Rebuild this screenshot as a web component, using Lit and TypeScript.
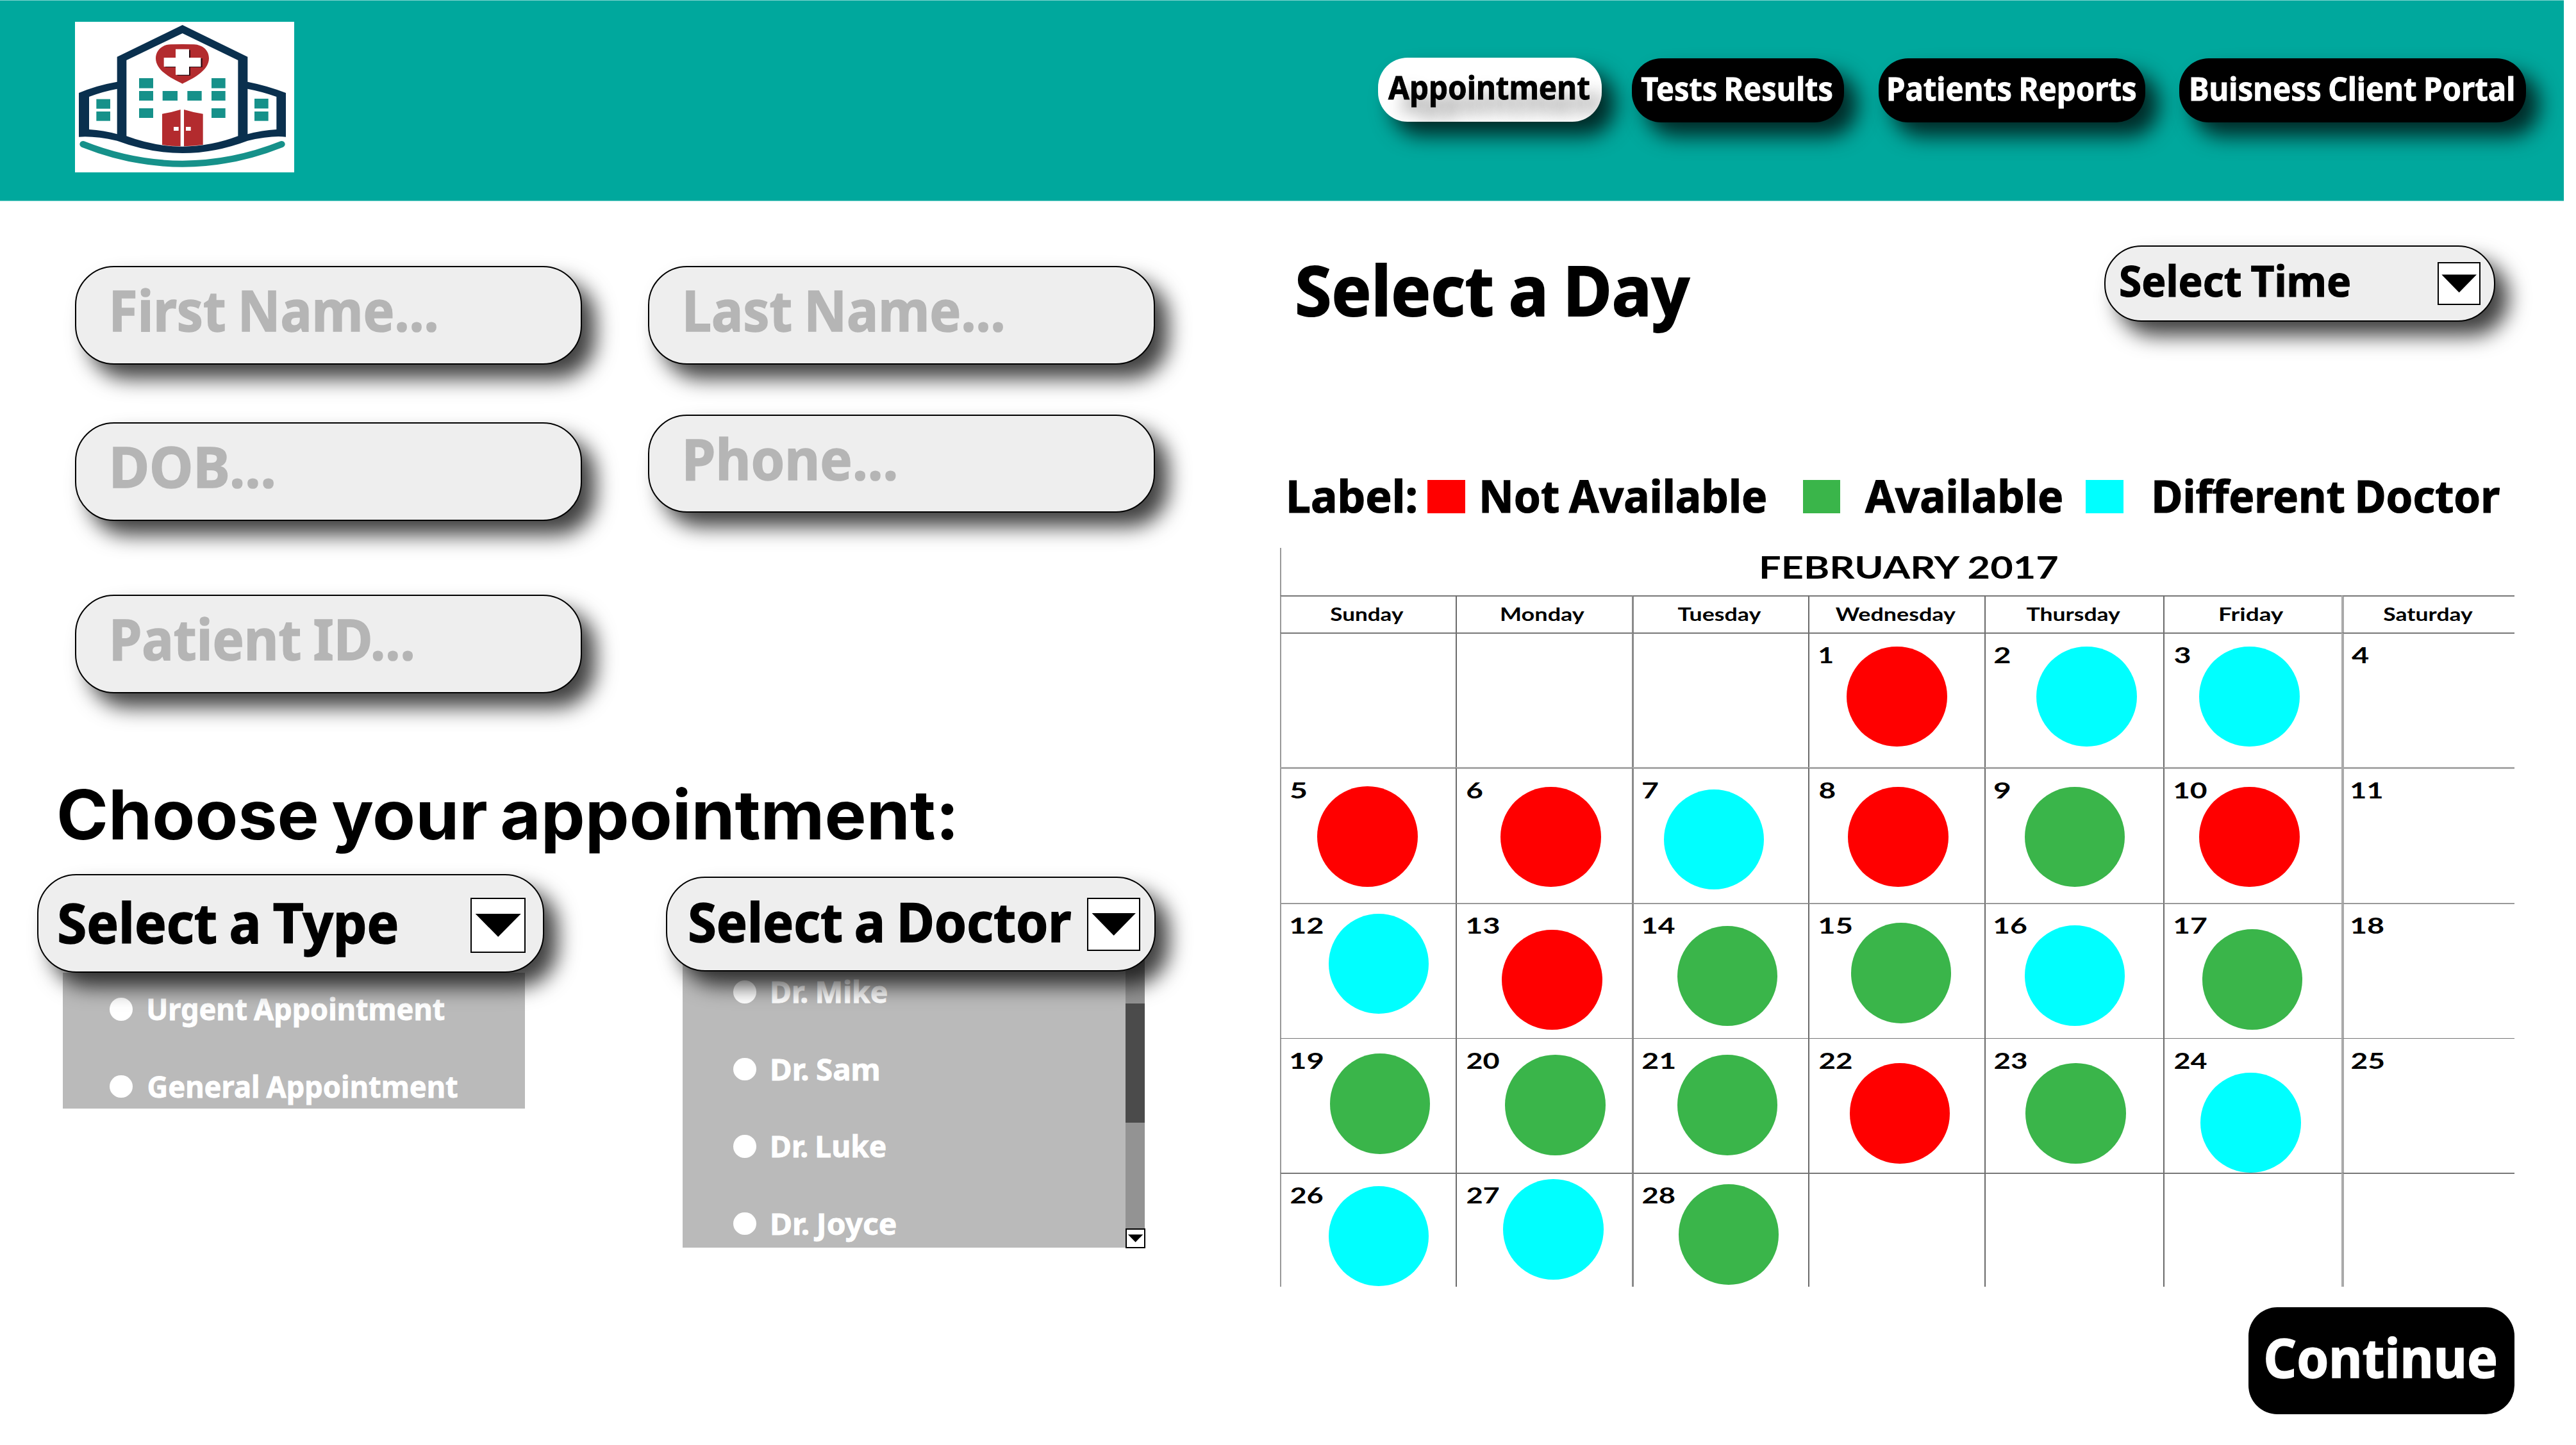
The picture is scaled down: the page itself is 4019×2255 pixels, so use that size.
import { LitElement, html, css, svg, nothing } from "lit";
import { customElement, property, state } from "lit/decorators.js";
import { styleMap } from "lit/directives/style-map.js";
import { classMap } from "lit/directives/class-map.js";

const HUMANIST = '"Noto Sans", "Open Sans", sans-serif';
const pen = document.createElement("canvas").getContext("2d")!;

/** One line of text whose ink fills a given width and whose capitals have a given height. */
@customElement("fit-text")
export class FitText extends LitElement {
  @property() text = "";
  @property({ type: Number }) w = 100;
  @property({ type: Number }) cap = 30;
  @property() family = HUMANIST;
  @property({ type: Number }) weight = 700;
  /** Width taken off each word space, in em. */
  @property({ type: Number }) tighten = 0.04;

  static styles = css`
    :host {
      display: block;
      flex: none;
    }
    .box {
      display: block;
    }
    .ink {
      display: block;
      width: max-content;
      white-space: nowrap;
      transform-origin: 0 0;
      font-kerning: normal;
    }
    .dense {
      -webkit-text-stroke: 0.018em currentColor;
    }
  `;

  render() {
    const probe = 200;
    pen.font = `${this.weight} ${probe}px ${this.family}`;
    const size = (this.cap / pen.measureText("H").actualBoundingBoxAscent) * probe;
    const m = pen.measureText(this.text);
    const k = size / probe;
    const gaps = this.text.split(" ").length - 1;
    const inkWidth = (m.actualBoundingBoxLeft + m.actualBoundingBoxRight) * k - gaps * this.tighten * size;
    const sx = this.w / inkWidth;
    const tx = m.actualBoundingBoxLeft * k * sx;
    const ascent = Math.round(m.fontBoundingBoxAscent * k);
    const descent = Math.round(m.fontBoundingBoxDescent * k);
    return html`<span class="box" style=${styleMap({ width: `${this.w}px`, height: `${this.cap}px` })}
      ><span
        class=${classMap({ ink: true, dense: this.family === HUMANIST })}
        style=${styleMap({
          fontFamily: this.family,
          fontWeight: String(this.weight),
          fontSize: `${size}px`,
          wordSpacing: `${-this.tighten}em`,
          lineHeight: `${ascent + descent}px`,
          transform: `translate(${tx}px, ${this.cap - ascent}px) scaleX(${sx})`,
        })}
        >${this.text}</span
      ></span
    >`;
  }
}

@customElement("hospital-logo")
export class HospitalLogo extends LitElement {
  static styles = css`
    :host {
      display: block;
      width: 342px;
      height: 235px;
      background: #fff;
    }
    svg {
      display: block;
      width: 100%;
      height: 100%;
    }
    .navy {
      fill: #0a304e;
    }
    .teal {
      fill: #16918a;
    }
    .red {
      fill: #b32b2e;
    }
    .white {
      fill: #fff;
    }
    .shade {
      fill: #2a0a10;
    }
    .swoosh {
      fill: none;
      stroke: #16918a;
      stroke-width: 30;
      stroke-linecap: round;
    }
  `;

  render() {
    const windows = [
      [381, 336, 66, 47], [381, 396, 66, 45], [381, 477, 66, 45],
      [720, 336, 65, 47], [720, 396, 65, 45], [720, 477, 65, 45],
      [491, 396, 70, 45], [607, 396, 67, 45],
      [181, 434, 65, 45], [181, 492, 65, 44],
      [921, 432, 65, 46], [921, 492, 65, 44],
    ];
    return html`<svg viewBox="81 72 1026 705" preserveAspectRatio="none" aria-label="Hospital">
      <path
        class="navy"
        d="M584 87 L889 236 V353 Q985 372 1068 405 V611 Q1000 603 889 629 Q735 687 584 687 Q433 687 278 629 Q170 605 99 611 V405 Q180 370 278 353 V236 Z"
      />
      <path class="white" d="M584 126 L844 252 V607 Q715 656 584 656 Q453 656 322 607 V252 Z" />
      <path class="white" d="M278 386 Q205 400 147 423 V576 Q215 580 278 598 Z" />
      <path class="white" d="M889 386 Q962 400 1024 423 V576 Q955 580 889 598 Z" />
      ${windows.map(([x, y, w, h]) => svg`<rect class="teal" x=${x} y=${y} width=${w} height=${h} />`)}
      <path
        class="red"
        d="M584 362 C545 342 459 305 459 243 C459 205 490 178 530 178 Q584 176 638 178 C678 180 708 205 708 243 C708 305 622 342 584 362 Z"
      />
      <path class="shade" d="M560 205 H621 V243 H677 V285 H621 V324 H560 V285 H504 V243 H560 Z" />
      <path class="white" d="M552 200 H615 V240 H670 V282 H615 V320 H552 V282 H497 V240 H552 Z" />
      <path class="red" d="M489 503 Q530 497 575 483 V655 Q530 654 489 648 Z" />
      <path class="red" d="M591 483 Q636 497 680 503 V648 Q636 654 591 655 Z" />
      <rect class="white" x="543" y="564" width="23" height="18" />
      <rect class="white" x="600" y="564" width="23" height="18" />
      <path class="swoosh" d="M118 645 Q350 737 584 737 Q818 737 1049 645" />
    </svg>`;
  }
}

@customElement("arrow-box")
export class ArrowBox extends LitElement {
  static styles = css`
    :host {
      display: block;
      box-sizing: border-box;
      flex: none;
      background: #fff;
      border: 2px solid #000;
    }
    svg {
      display: block;
      width: 100%;
      height: 100%;
    }
  `;

  render() {
    return html`<svg viewBox="0 0 86 86"><path d="M6 24 H80.5 L43.2 62 Z" /></svg>`;
  }
}

type Status = "busy" | "free" | "other";
interface Day {
  n: number;
  status?: Status;
  cx?: number;
  cy?: number;
}

const COLS = [1997, 2271, 2546, 2821, 3096, 3375, 3653];
const ROWS = [987, 1197, 1409, 1620, 1830];
const NUM_X = [2014, 2289.3, 2563.3, 2839, 3112.3, 3393.2, 3669];

const DAYS: Day[] = [
  { n: 1, status: "busy", cx: 2959.5, cy: 1087 },
  { n: 2, status: "other", cx: 3255.4, cy: 1087 },
  { n: 3, status: "other", cx: 3509.5, cy: 1087 },
  { n: 4 },
  { n: 5, status: "busy", cx: 2133.4, cy: 1305.3 },
  { n: 6, status: "busy", cx: 2419.7, cy: 1305.8 },
  { n: 7, status: "other", cx: 2673.9, cy: 1310 },
  { n: 8, status: "busy", cx: 2961.4, cy: 1305.8 },
  { n: 9, status: "free", cx: 3236.8, cy: 1306 },
  { n: 10, status: "busy", cx: 3509.5, cy: 1306 },
  { n: 11 },
  { n: 12, status: "other", cx: 2150.9, cy: 1504 },
  { n: 13, status: "busy", cx: 2421.6, cy: 1529.2 },
  { n: 14, status: "free", cx: 2694.9, cy: 1522.8 },
  { n: 15, status: "free", cx: 2965.8, cy: 1518.5 },
  { n: 16, status: "other", cx: 3236.8, cy: 1522.6 },
  { n: 17, status: "free", cx: 3513.8, cy: 1528.7 },
  { n: 18 },
  { n: 19, status: "free", cx: 2153.2, cy: 1722.6 },
  { n: 20, status: "free", cx: 2426.4, cy: 1724.7 },
  { n: 21, status: "free", cx: 2694.9, cy: 1724.7 },
  { n: 22, status: "busy", cx: 2963.8, cy: 1737.3 },
  { n: 23, status: "free", cx: 3238.6, cy: 1737.3 },
  { n: 24, status: "other", cx: 3511.6, cy: 1751.9 },
  { n: 25 },
  { n: 26, status: "other", cx: 2150.9, cy: 1928.8 },
  { n: 27, status: "other", cx: 2423.6, cy: 1918.7 },
  { n: 28, status: "free", cx: 2696.8, cy: 1926.7 },
];

const WEEKDAYS: [string, number][] = [
  ["Sunday", 113.5],
  ["Monday", 129],
  ["Tuesday", 129.5],
  ["Wednesday", 187],
  ["Thursday", 146],
  ["Friday", 98.5],
  ["Saturday", 139],
];

@customElement("month-calendar")
export class MonthCalendar extends LitElement {
  static styles = css`
    :host {
      display: grid;
      grid-template-columns: 274px 275px 275px 275px 279px 278px 270px;
      grid-template-rows: 74px 58px 210px 212px 211px 210px 178px;
      width: 1926px;
    }
    .title {
      grid-column: 1 / -1;
      box-sizing: border-box;
      border-left: 2px solid #999;
      padding: 13.5px 0 0 750px;
    }
    .cell {
      box-sizing: border-box;
      position: relative;
      border-left: 2px solid #6a6a6a;
      border-top: 2px solid #777;
    }
    .c0 {
      border-left-color: #999;
    }
    .c2 {
      border-left-width: 3px;
      border-left-color: #8a8a8a;
    }
    .c6 {
      border-left-width: 4px;
      border-left-color: #aaa;
    }
    .r1 {
      border-top-width: 3px;
      border-top-color: #a8a8a8;
    }
    .r2 {
      border-top-color: #999;
    }
    .r3 {
      border-top-width: 1px;
    }
    .name {
      display: flex;
      justify-content: center;
      padding: 18px 4px 0 0;
    }
    .dot {
      position: absolute;
      width: 156.5px;
      height: 156.5px;
      border-radius: 50%;
      z-index: 1;
    }
    .busy {
      background: #f00;
    }
    .free {
      background: #3ab54a;
    }
    .other {
      background: #0ff;
    }
    .num {
      position: relative;
      display: block;
      z-index: 2;
    }
  `;

  private numberWidth(n: number) {
    if (n === 1) return 19.5;
    if (n === 4) return 26;
    if (n < 10) return 23.5;
    return n === 11 ? 47 : 49.5;
  }

  private borderLeft(c: number) {
    return c === 6 ? 4 : c === 2 ? 3 : 2;
  }

  private cell(r: number, c: number) {
    const day = DAYS[r * 7 + c - 3];
    const bl = this.borderLeft(c);
    const bt = r === 1 ? 3 : r === 3 ? 1 : 2;
    return html`<div class=${classMap({ cell: true, [`c${c}`]: true, [`r${r}`]: true })}>
      ${day
        ? html`<fit-text
              class="num"
              style=${styleMap({
                paddingLeft: `${NUM_X[c] - COLS[c] - bl}px`,
                paddingTop: `${[1010, 1221.2, 1432, 1643, 1853.4][r] - ROWS[r] - bt}px`,
              })}
              .text=${String(day.n)}
              .w=${this.numberWidth(day.n)}
              .cap=${25.3}
              .family=${"Lato, sans-serif"}
            ></fit-text>
            ${day.status
              ? html`<span
                  class="dot ${day.status}"
                  style=${styleMap({
                    left: `${day.cx! - 78.25 - COLS[c] - bl}px`,
                    top: `${day.cy! - 78.25 - ROWS[r] - bt}px`,
                  })}
                ></span>`
              : nothing}`
        : nothing}
    </div>`;
  }

  render() {
    return html`
      <div class="title">
        <fit-text
          .text=${"FEBRUARY 2017"}
          .w=${463.5}
          .cap=${34.3}
          .tighten=${0}
          .family=${"Lato, sans-serif"}
        ></fit-text>
      </div>
      ${WEEKDAYS.map(
        ([name, w], c) => html`<div class="cell name c${c}">
          <fit-text .text=${name} .w=${w} .cap=${20.4} .family=${"Lato, sans-serif"}></fit-text>
        </div>`
      )}
      ${ROWS.map((_, r) => COLS.map((_x, c) => this.cell(r, c)))}
    `;
  }
}

@customElement("app-root")
export class AppRoot extends LitElement {
  @state() private types: [string, number][] = [
    ["Urgent Appointment", 461],
    ["General Appointment", 481.5],
  ];
  @state() private doctors: [string, number][] = [
    ["Dr. Mike", 178.5],
    ["Dr. Sam", 165.5],
    ["Dr. Luke", 176.5],
    ["Dr. Joyce", 192.5],
  ];

  static styles = css`
    :host {
      display: block;
      width: 4019px;
      height: 2255px;
      overflow: hidden;
      background: #fff;
      color: #000;
      --drop: 21px 22px 32px rgba(0, 0, 0, 0.75);
    }
    .header {
      display: flex;
      align-items: flex-start;
      justify-content: space-between;
      box-sizing: border-box;
      width: 4000px;
      height: 314px;
      padding: 33px 59px 0 117px;
      border-top: 1px solid #7fd3ce;
      border-bottom: 1px solid #7fd3ce;
      background: #00a89d;
    }
    .nav {
      display: flex;
      align-items: flex-start;
      padding-top: 56px;
    }
    .tab {
      box-sizing: border-box;
      height: 100px;
      padding-top: 31px;
      margin-top: 1px;
      border-radius: 46px;
      background: #000;
      color: #fff;
      box-shadow: var(--drop);
    }
    .t0 {
      width: 348.5px;
      margin-top: 0;
      margin-right: 47.5px;
      padding-top: 30px;
      padding-left: 15.5px;
      overflow: hidden;
      background: #fff;
      color: #000;
      text-shadow: 22px 22px 26px rgba(0, 0, 0, 0.45);
    }
    .t1 {
      width: 331px;
      margin-right: 54px;
      padding-left: 14.5px;
    }
    .t2 {
      width: 416px;
      margin-right: 53px;
      padding-left: 16px;
    }
    .t3 {
      width: 541px;
      padding-left: 18.5px;
    }
    .main {
      display: flex;
      align-items: flex-start;
    }
    .left {
      width: 1997px;
      flex: none;
      padding-top: 101px;
    }
    .fields {
      display: flex;
      gap: 103px;
      padding-left: 117px;
    }
    .col-a,
    .col-b {
      display: flex;
      flex-direction: column;
      width: 791px;
    }
    .col-a {
      gap: 90.5px;
    }
    .col-b {
      gap: 78px;
    }
    .field {
      box-sizing: border-box;
      height: 153.5px;
      padding: 38px 0 0 57.5px;
      border: 2px solid #000;
      border-radius: 61px;
      background: #eee;
      color: #b5b5b5;
      box-shadow: var(--drop);
    }
    .last {
      margin-top: 25px;
    }
    .choose {
      padding: 150.5px 0 0 93px;
    }
    .selects {
      display: flex;
      align-items: flex-start;
      padding: 54px 0 0 58px;
    }
    .type {
      width: 791px;
      margin-right: 189.5px;
    }
    .doctor {
      width: 764px;
      padding-top: 4px;
    }
    .pill {
      position: relative;
      z-index: 1;
      display: flex;
      align-items: flex-start;
      justify-content: space-between;
      box-sizing: border-box;
      border: 2px solid #000;
      border-radius: 61px;
      background: #eee;
      box-shadow: var(--drop);
    }
    .type-pill {
      height: 153.5px;
      padding: 34.5px 27px 0 32.5px;
    }
    .doctor-pill {
      height: 148px;
      padding: 31px 21.5px 0 36.5px;
    }
    .time-pill {
      width: 610px;
      height: 119px;
      padding: 24px 21px 0 24.5px;
      border-radius: 58px;
    }
    .type-label {
      padding-top: 9.5px;
    }
    .doctor-label {
      padding-top: 8.5px;
    }
    .time-label {
      padding-top: 6px;
    }
    .a86 {
      width: 86px;
      height: 86px;
    }
    .a83 {
      width: 83px;
      height: 83px;
    }
    .a67 {
      width: 67px;
      height: 67px;
    }
    .panel {
      box-sizing: border-box;
      display: flex;
      justify-content: space-between;
      background: #bababa;
      color: #fff;
    }
    .type-panel {
      width: 721px;
      height: 212px;
      margin-left: 40px;
      padding: 39.5px 0 0 73px;
    }
    .doctor-panel {
      width: 721px;
      height: 471px;
      margin: -40px 0 0 26.5px;
      padding-left: 79px;
    }
    .doctor-list {
      padding-top: 54px;
    }
    .option {
      display: flex;
      align-items: center;
      gap: 25px;
      height: 35.5px;
      margin-bottom: 85px;
    }
    .bullet {
      flex: none;
      width: 35.5px;
      height: 35.5px;
      border-radius: 50%;
      background: #fff;
    }
    .scroll {
      display: flex;
      flex-direction: column;
      width: 30px;
      background: #939393;
    }
    .thumb {
      height: 186px;
      margin-top: 89.5px;
      background: #4b4b4b;
    }
    .down {
      width: 31px;
      height: 31px;
      margin-top: auto;
      margin-bottom: -1px;
    }
    .right {
      width: 1926px;
      flex: none;
      padding-top: 69px;
    }
    .top {
      display: flex;
      align-items: flex-start;
      justify-content: space-between;
      height: 119px;
      padding: 0 30.5px 0 27.5px;
    }
    .day-title {
      padding-top: 32.5px;
    }
    .legend {
      display: flex;
      align-items: flex-start;
      height: 52px;
      margin: 247px 0 54px;
      padding-left: 15px;
    }
    .legend fit-text {
      padding-top: 1px;
    }
    .swatch {
      flex: none;
      width: 58.5px;
      height: 52px;
    }
    .s-busy {
      margin: 0 27px 0 18.5px;
      background: #f00;
    }
    .s-free {
      margin: 0 38.5px 0 58.5px;
      background: #3ab54a;
    }
    .s-other {
      margin: 0 49px 0 38px;
      background: #0ff;
    }
    .continue {
      box-sizing: border-box;
      width: 415px;
      height: 167px;
      margin: 32px 0 0 auto;
      padding: 50px 0 0 27.5px;
      border-radius: 45px;
      background: #000;
      color: #fff;
    }
  `;

  private field(text: string, w: number, last = false) {
    return html`<div class=${classMap({ field: true, last })}>
      <fit-text .text=${text} .w=${w} .cap=${62.5}></fit-text>
    </div>`;
  }

  private option([text, w]: [string, number]) {
    return html`<div class="option">
      <span class="bullet"></span>
      <fit-text .text=${text} .w=${w} .cap=${33.5}></fit-text>
    </div>`;
  }

  render() {
    const tabs: [string, number][] = [
      ["Appointment", 313.5],
      ["Tests Results", 297],
      ["Patients Reports", 385],
      ["Buisness Client Portal", 502],
    ];
    return html`
      <header class="header">
        <hospital-logo></hospital-logo>
        <nav class="nav">
          ${tabs.map(
            ([text, w], i) => html`<div class="tab t${i}"><fit-text .text=${text} .w=${w} .cap=${35.3}></fit-text></div>`
          )}
        </nav>
      </header>
      <main class="main">
        <section class="left">
          <div class="fields">
            <div class="col-a">
              ${this.field("First Name...", 503.5)} ${this.field("DOB...", 249.5)}
              ${this.field("Patient ID...", 466.5, true)}
            </div>
            <div class="col-b">${this.field("Last Name...", 493.5)} ${this.field("Phone...", 326)}</div>
          </div>
          <div class="choose">
            <fit-text
              .text=${"Choose your appointment:"}
              .w=${1395}
              .cap=${78}
              .tighten=${0.06}
              .family=${"Inter, sans-serif"}
            ></fit-text>
          </div>
          <div class="selects">
            <div class="type">
              <div class="pill type-pill">
                <fit-text class="type-label" .text=${"Select a Type"} .w=${526} .cap=${62}></fit-text>
                <arrow-box class="a86"></arrow-box>
              </div>
              <div class="panel type-panel">
                <div>${this.types.map((o) => this.option(o))}</div>
              </div>
            </div>
            <div class="doctor">
              <div class="pill doctor-pill">
                <fit-text class="doctor-label" .text=${"Select a Doctor"} .w=${593.5} .cap=${60.5}></fit-text>
                <arrow-box class="a83"></arrow-box>
              </div>
              <div class="panel doctor-panel">
                <div class="doctor-list">${this.doctors.map((o) => this.option(o))}</div>
                <div class="scroll">
                  <div class="thumb"></div>
                  <arrow-box class="down"></arrow-box>
                </div>
              </div>
            </div>
          </div>
        </section>
        <section class="right">
          <div class="top">
            <fit-text class="day-title" .text=${"Select a Day"} .w=${611.5} .cap=${76.5}></fit-text>
            <div class="pill time-pill">
              <fit-text class="time-label" .text=${"Select Time"} .w=${356.5} .cap=${47.7}></fit-text>
              <arrow-box class="a67"></arrow-box>
            </div>
          </div>
          <div class="legend">
            <fit-text .text=${"Label:"} .w=${196.5} .cap=${49.5}></fit-text>
            <span class="swatch s-busy"></span>
            <fit-text .text=${"Not Available"} .w=${441.5} .cap=${49.5}></fit-text>
            <span class="swatch s-free"></span>
            <fit-text .text=${"Available"} .w=${306.5} .cap=${49.5}></fit-text>
            <span class="swatch s-other"></span>
            <fit-text .text=${"Different Doctor"} .w=${537.5} .cap=${49.5}></fit-text>
          </div>
          <month-calendar></month-calendar>
          <div class="continue"><fit-text .text=${"Continue"} .w=${357.5} .cap=${60.5}></fit-text></div>
        </section>
      </main>
    `;
  }
}
